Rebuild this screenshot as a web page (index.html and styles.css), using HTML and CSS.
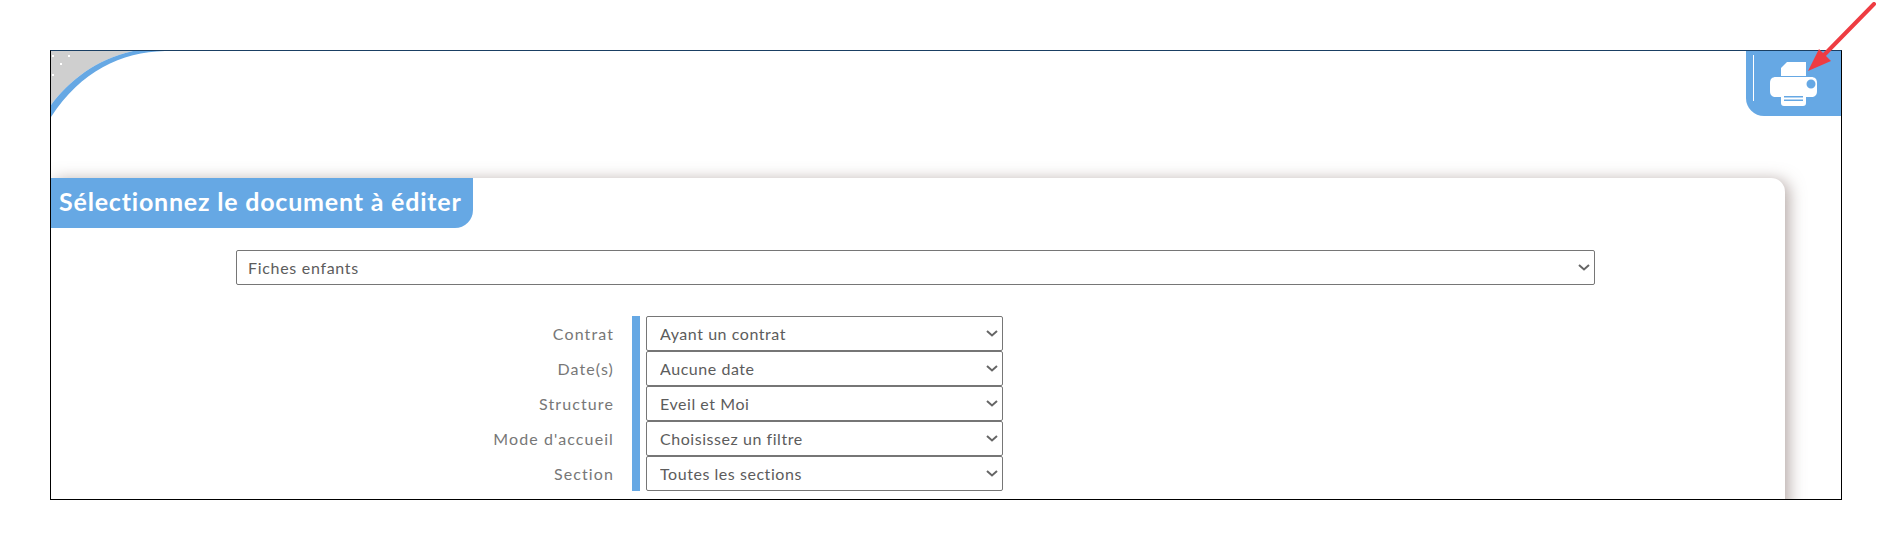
FILE: index.html
```html
<!DOCTYPE html>
<html lang="fr">
<head>
    <meta charset="UTF-8">
    <title>Editions</title>
    <link rel="stylesheet" href="styles.css">
</head>
<body>
    <div class="frame">
        <svg class="corner" width="120" height="70" viewBox="0 0 120 70">
            <path d="M0 54C18 30 45 8 82 0H0Z" fill="#cfcfcf"/>
            <path d="M0 54C18 30 45 8 82 0H114C70 1 30 20 0 66Z" fill="#66a8e4"/>
            <rect x="1" y="4" width="2" height="2" fill="#fff"/>
            <rect x="17" y="4" width="2" height="2" fill="#fff"/>
            <rect x="9" y="12" width="2" height="2" fill="#fff"/>
            <rect x="1" y="23" width="2" height="2" fill="#fff"/>
        </svg>

        <div class="top-bar">
            <div class="print-tab">
                <span class="print-line"></span>
                <svg class="print-icon" width="48" height="44" viewBox="0 0 48 44">
                    <path d="M17 0H36V14H11V6Z" fill="#fff"/>
                    <path fill="#fff" fill-rule="evenodd" d="M6 15H41C45 15 47 17 47 21V29C47 33 45 35 41 35H36V41C36 43 35 44 33 44H14C12 44 11 43 11 41V35H6C2 35 0 33 0 29V21C0 17 2 15 6 15ZM41 17.500A4.500 4.500 0 1 0 41.010 26.500A4.500 4.500 0 1 0 41 17.500ZM14 34V35.500H33V34ZM14 37.500V39H33V37.500Z"/>
                </svg>
            </div>
        </div>

        <div class="card">
            <h2 class="card-title">Sélectionnez le document à éditer</h2>

            <div class="doc-row">
                <select class="doc-select">
                    <option>Fiches enfants</option>
                </select>
            </div>

            <div class="filters">
                <div class="filter-labels">
                    <label>Contrat</label>
                    <label>Date(s)</label>
                    <label>Structure</label>
                    <label>Mode d'accueil</label>
                    <label>Section</label>
                </div>
                <div class="filter-selects">
                    <select><option>Ayant un contrat</option></select>
                    <select><option>Aucune date</option></select>
                    <select><option>Eveil et Moi</option></select>
                    <select><option>Choisissez un filtre</option></select>
                    <select><option>Toutes les sections</option></select>
                </div>
            </div>
        </div>
    </div>

    <svg class="arrow" width="70" height="72" viewBox="0 0 70 72">
        <path d="M67 2L18 52" stroke="#ee3c42" stroke-width="4" stroke-linecap="round" fill="none"/>
        <path d="M1 69L12 47L24 59Z" fill="#ee3c42"/>
    </svg>
</body>
</html>
```

FILE: styles.css
```css
body {
    margin: 0;
    background-color: white;
    font-family: "Lato", sans-serif;
    color: #777;
}
.frame {
    position: relative;
    width: 1792px;
    height: 450px;
    margin: 50px 0 0 50px;
    border: 1px solid black;
    border-top-color: #1a3f63;
    box-sizing: border-box;
    overflow: hidden;
}
.corner {
    position: absolute;
    left: 0;
    top: 0;
}
.top-bar {
    display: flex;
    justify-content: flex-end;
    height: 127px;
}
.print-tab {
    display: flex;
    width: 95px;
    height: 65px;
    box-sizing: border-box;
    padding: 4px 0 0 7px;
    background-color: #66a8e4;
    border-bottom-left-radius: 18px;
}
.print-line {
    width: 1px;
    height: 46px;
    background-color: white;
}
.print-icon {
    margin: 7px 0 0 16px;
}
.card {
    width: 1734px;
    height: 340px;
    background-color: white;
    border-radius: 0 14px 14px 0;
    box-shadow: 4px 2px 16px rgba(110, 85, 80, 0.5);
}
.card-title {
    display: inline-block;
    height: 50px;
    width: 422px;
    margin: 0;
    padding-left: 8px;
    box-sizing: border-box;
    background-color: #66a8e4;
    border-bottom-right-radius: 18px;
    color: white;
    font-size: 25px;
    font-weight: 700;
    line-height: 46px;
    letter-spacing: 0.8px;
    white-space: nowrap;
    vertical-align: top;
}
.doc-row {
    margin: 22px 0 31px 185px;
}
select {
    display: block;
    height: 35px;
    padding: 0 13px;
    appearance: none;
    background-color: white;
    background-image: url("data:image/svg+xml,%3Csvg xmlns='http://www.w3.org/2000/svg' width='12' height='7'%3E%3Cpath d='M1 1l5 4.500 5-4.500' fill='none' stroke='%23666' stroke-width='2'/%3E%3C/svg%3E");
    background-repeat: no-repeat;
    background-position: right 4px center;
    border: 1px solid #767676;
    border-radius: 2px;
    color: #5c5c5c;
    font-family: "Lato", sans-serif;
    font-size: 16px;
    letter-spacing: 0.55px;
}
.doc-select {
    width: 1359px;
    padding-left: 11px;
    letter-spacing: 0.7px;
}
.filters {
    display: flex;
    align-items: flex-start;
}
.filter-labels {
    width: 563px;
    margin-right: 18px;
    text-align: right;
}
.filter-labels label {
    display: block;
    height: 35px;
    font-size: 16px;
    line-height: 35px;
    letter-spacing: 1.1px;
}
.filter-selects {
    padding-left: 6px;
    border-left: 8px solid #66a8e4;
}
.filter-selects select {
    width: 357px;
}
.arrow {
    position: absolute;
    left: 1807px;
    top: 2px;
}
```
